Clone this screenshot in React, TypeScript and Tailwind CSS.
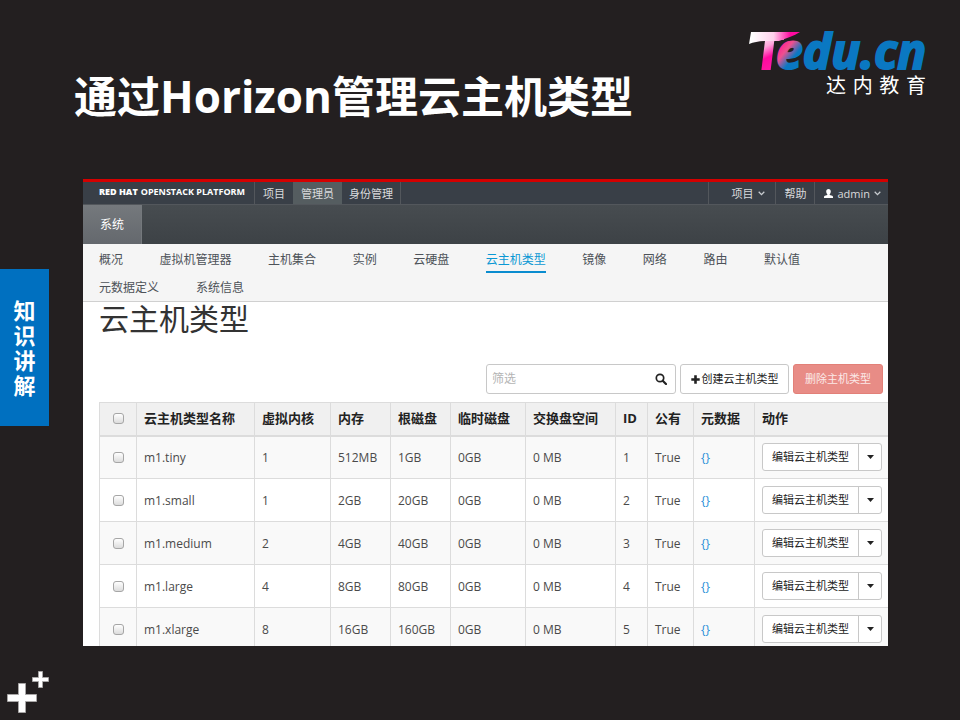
import React from "react";

const cjk = "font-['Open_Sans','Noto_Sans_CJK_SC',sans-serif]";

const mainTabs = ["项目", "管理员", "身份管理"];

const panels = [
  "概况",
  "虚拟机管理器",
  "主机集合",
  "实例",
  "云硬盘",
  "云主机类型",
  "镜像",
  "网络",
  "路由",
  "默认值",
];

const morePanels = ["元数据定义", "系统信息"];

const columns = [
  { title: "云主机类型名称", width: "w-[118px]" },
  { title: "虚拟内核", width: "w-[76px]" },
  { title: "内存", width: "w-[60px]" },
  { title: "根磁盘", width: "w-[60px]" },
  { title: "临时磁盘", width: "w-[75px]" },
  { title: "交换盘空间", width: "w-[90px]" },
  { title: "ID", width: "w-[32px]" },
  { title: "公有", width: "w-[46px]" },
  { title: "元数据", width: "w-[61px]" },
  { title: "动作", width: "" },
];

const flavors = [
  { name: "m1.tiny", vcpus: "1", ram: "512MB", root: "1GB", id: "1" },
  { name: "m1.small", vcpus: "1", ram: "2GB", root: "20GB", id: "2" },
  { name: "m1.medium", vcpus: "2", ram: "4GB", root: "40GB", id: "3" },
  { name: "m1.large", vcpus: "4", ram: "8GB", root: "80GB", id: "4" },
  { name: "m1.xlarge", vcpus: "8", ram: "16GB", root: "160GB", id: "5" },
];

function Logo() {
  return (
    <div className="mt-[28px] mr-[34px] flex flex-col items-end gap-px">
      <svg width="178" height="46" viewBox="0 0 178 46" className="overflow-visible" aria-label="Tedu.cn">
        <defs>
          <linearGradient id="logoT" gradientUnits="userSpaceOnUse" x1="12" y1="0" x2="32" y2="44">
            <stop offset="0.1" stopColor="#ffffff" />
            <stop offset="0.4" stopColor="#ffa6dc" />
            <stop offset="0.62" stopColor="#ff0aa0" />
            <stop offset="1" stopColor="#ff1fa4" />
          </linearGradient>
          <linearGradient id="logoSwoosh" gradientUnits="userSpaceOnUse" x1="4" y1="0" x2="52" y2="0">
            <stop offset="0" stopColor="#ffffff" />
            <stop offset="0.45" stopColor="#ffd0ec" />
            <stop offset="0.8" stopColor="#ff0aa0" />
          </linearGradient>
          <linearGradient id="logoE" gradientUnits="userSpaceOnUse" x1="30" y1="18" x2="50" y2="34">
            <stop offset="0" stopColor="#ff1a90" />
            <stop offset="0.35" stopColor="#f0508f" />
            <stop offset="0.75" stopColor="#0a78c2" />
          </linearGradient>
        </defs>
        <g fontStyle="italic" strokeWidth="2">
          <text
            x="6"
            y="41"
            fill="url(#logoT)"
            stroke="url(#logoT)"
            fontFamily="Lato, sans-serif"
            fontWeight="900"
            fontSize="50"
          >
            T
          </text>
          <path d="M3 4H52C46 8 38 10 31 13L18 13C12 13 6 14 1 16Z" fill="url(#logoSwoosh)" />
          <text
            x="28"
            y="41"
            fill="#0a78c2"
            stroke="#0a78c2"
            fontFamily="'Open Sans', sans-serif"
            fontWeight="700"
            fontSize="48"
          >
            <tspan fill="url(#logoE)" stroke="url(#logoE)">
              e
            </tspan>
            <tspan>du.cn</tspan>
          </text>
        </g>
      </svg>
      <div className="flex w-[100px] justify-between text-[20px] leading-[22px] text-white">
        <span>达</span>
        <span>内</span>
        <span>教</span>
        <span>育</span>
      </div>
    </div>
  );
}

function Chevron() {
  return (
    <svg width="7" height="5" viewBox="0 0 7 5" aria-hidden="true">
      <path d="M.7 .8l2.800 2.800L6.300 .8" fill="none" stroke="#c8ccd0" strokeWidth="1.3" />
    </svg>
  );
}

function UserIcon() {
  return (
    <svg width="9" height="9" viewBox="0 0 9 9" fill="#fff" aria-hidden="true">
      <path d="M4.5 0C6 0 6.800 1.100 6.800 2.500 6.800 3.700 6.300 4.700 5.700 5.300V6L8.200 6.800C8.800 7 9 7.400 9 7.900V9H0V7.900C0 7.400 .2 7 .8 6.800L3.300 6V5.300C2.700 4.700 2.200 3.700 2.200 2.500 2.200 1.100 3 0 4.500 0Z" />
    </svg>
  );
}

function TopBar() {
  return (
    <div className="flex h-[23px] border-b border-[#53575c] bg-[#393f47] text-[11px] leading-[23px] text-[#d9dbdd]">
      <div className="flex w-[172px] shrink-0 border-r border-[#53575c] pl-4 leading-[19px] whitespace-nowrap text-white">
        <span className="text-[9px] font-extrabold">RED HAT</span>
        <span className="ml-[3px] text-[9px] font-bold">OPENSTACK PLATFORM</span>
      </div>
      {mainTabs.map((tab) => (
        <button
          key={tab}
          className={
            tab === "管理员"
              ? "bg-[#555d60] px-2"
              : tab === "项目"
                ? "px-2"
                : "border-r border-[#53575c] px-[7px]"
          }
        >
          {tab}
        </button>
      ))}
      <div className="ml-auto flex">
        <button className="flex items-center gap-[5px] border-l border-[#53575c] pr-[10px] pl-[22px]">
          项目
          <Chevron />
        </button>
        <button className="border-l border-[#53575c] px-2">帮助</button>
        <button className="flex items-center gap-1 border-l border-[#53575c] pr-[7px] pl-[9px]">
          <UserIcon />
          <span>admin</span>
          <Chevron />
        </button>
      </div>
    </div>
  );
}

function PanelNav() {
  return (
    <nav className="h-[58px] border-b border-[#d0d0d0] bg-[#f5f5f5] pl-4 text-[12px] leading-[18px] text-[#4d5258]">
      <ul className="flex justify-between pt-[7px] pr-[88px]">
        {panels.map((p) => (
          <li key={p}>
            <a
              href="#"
              className={
                p === "云主机类型"
                  ? "block h-[22px] border-b-2 border-[#0a8ccf] text-[#0a98d4]"
                  : "block h-[22px]"
              }
            >
              {p}
            </a>
          </li>
        ))}
      </ul>
      <ul className="flex gap-[37px] pt-[6px]">
        {morePanels.map((p) => (
          <li key={p}>
            <a href="#">{p}</a>
          </li>
        ))}
      </ul>
    </nav>
  );
}

function Check({ label }: { label: string }) {
  return (
    <input
      type="checkbox"
      aria-label={label}
      className="mx-auto block size-[11px] appearance-none rounded-[3px] border border-[#a6a6a6] bg-linear-to-b from-white to-[#dcdcdc] checked:bg-[#0a8ccf]"
    />
  );
}

function Toolbar() {
  return (
    <div className="flex h-[30px] justify-end gap-1 pr-[5px] text-[11px]">
      <div className="flex w-[190px] items-center rounded-[3px] border border-[#c8c8c8] bg-white px-[5px]">
        <input
          type="text"
          aria-label="筛选"
          placeholder="筛选"
          className="min-w-0 flex-1 text-[12px] outline-none placeholder:text-[#b4b4b4]"
        />
        <button aria-label="搜索" className="pr-[3px]">
          <svg width="12" height="12" viewBox="0 0 12 12" fill="none" stroke="#222" aria-hidden="true">
            <circle cx="5" cy="5" r="3.7" strokeWidth="1.7" />
            <path d="M7.7 7.7L11 11" strokeWidth="2.2" strokeLinecap="round" />
          </svg>
        </button>
      </div>
      <button className="flex w-[109px] items-center justify-center gap-[2px] rounded-[3px] border border-[#c8c8c8] bg-white whitespace-nowrap text-[#222]">
        <svg width="9" height="9" viewBox="0 0 9 9" aria-hidden="true">
          <path d="M4.5 0.3V8.700M0.3 4.5H8.700" stroke="#222" strokeWidth="2.6" />
        </svg>
        创建云主机类型
      </button>
      <button className="w-[90px] rounded-[3px] border border-[#e28078] bg-[#e88c86] whitespace-nowrap text-[#fbe9e8]">
        删除主机类型
      </button>
    </div>
  );
}

function FlavorTable() {
  return (
    <table className="w-full table-fixed border-collapse text-left text-[12px] text-[#4a4a4a]">
      <thead>
        <tr className="h-[33px] border-t border-b-2 border-[#dcdcdc] bg-[#f0f0f0]">
          <th className="w-[37px] border-x border-[#dcdcdc]">
            <Check label="全选" />
          </th>
          {columns.map((c) => (
            <th
              key={c.title}
              className={`${c.width} border-l border-[#dcdcdc] pb-[2px] pl-[7px] text-[13px] leading-[18px] font-bold whitespace-nowrap text-[#222]`}
            >
              {c.title}
            </th>
          ))}
        </tr>
      </thead>
      <tbody>
        {flavors.map((f) => (
          <tr key={f.id} className="h-[43px] border-b border-[#dcdcdc] odd:bg-[#f9f9f9] even:bg-white">
            <td className="border-x border-[#dcdcdc]">
              <Check label={f.name} />
            </td>
            {[f.name, f.vcpus, f.ram, f.root, "0GB", "0 MB", f.id, "True"].map((v, i) => (
              <td key={i} className="border-l border-[#dcdcdc] pt-[2px] pl-[7px] whitespace-nowrap">
                {v}
              </td>
            ))}
            <td className="border-l border-[#dcdcdc] pt-[2px] pl-[7px]">
              <a href="#" className="text-[#2a8fd8]">
                {"{}"}
              </a>
            </td>
            <td className="border-l border-[#dcdcdc] pl-[7px]">
              <div className="flex h-[28px] w-[120px] rounded-[3px] border border-[#c8c8c8] bg-white text-[11px] text-[#222]">
                <button className="flex-1 whitespace-nowrap">编辑云主机类型</button>
                <button
                  aria-label="更多动作"
                  className="flex w-[23px] items-center justify-center border-l border-[#c8c8c8]"
                >
                  <svg width="7" height="4" viewBox="0 0 7 4" aria-hidden="true">
                    <path d="M0 0H7L3.5 4Z" fill="#222" />
                  </svg>
                </button>
              </div>
            </td>
          </tr>
        ))}
      </tbody>
    </table>
  );
}

export default function App() {
  return (
    <div className={`flex h-screen flex-col overflow-hidden bg-[#231f20] ${cjk}`}>
      <header className="flex h-[179px] shrink-0 items-start justify-between">
        <h1 className="mt-[66px] ml-[74px] text-[43px] leading-[60px] font-bold whitespace-nowrap text-white">
          通过<span className="text-[44px]">Horizon</span>管理云主机类型
        </h1>
        <Logo />
      </header>

      <main className="flex min-h-0 flex-1 gap-[34px] pr-[72px]">
        <aside className="mt-[90px] flex h-[157px] w-[49px] shrink-0 items-center justify-center bg-[#0070c0]">
          <p className="w-[22px] text-[22px] leading-[25px] font-bold break-all text-white">知识讲解</p>
        </aside>

        <section className="min-w-0 flex-1 overflow-hidden border-t-3 border-[#d40000] bg-white">
          <TopBar />
          <div className="flex h-[39px] bg-linear-to-b from-[#474c50] to-[#3d4246]">
            <button className="w-[59px] border-r border-[#74787c] bg-linear-to-b from-[#75797d] to-[#64686d] text-[12px] text-white">
              系统
            </button>
          </div>
          <PanelNav />
          <div className="pl-4">
            <h2 className="mb-[26px] h-[36px] text-[30px] leading-[34px] font-normal text-[#333]">云主机类型</h2>
            <Toolbar />
            <div className="pt-2">
              <FlavorTable />
            </div>
          </div>
        </section>
      </main>

      <footer className="h-[74px] shrink-0 pt-[25px] pl-[7px]">
        <svg width="42" height="42" viewBox="0 0 42 42" fill="#fff" stroke="#a8a6a6" strokeWidth="1" aria-hidden="true">
          <path d="M11.5 12.5h7v11h11v7h-11v11h-7v-11h-11v-7h11z" />
          <path d="M31.500 .5h4v6h6v4h-6v6h-4v-6h-6v-4h6z" />
        </svg>
      </footer>
    </div>
  );
}
